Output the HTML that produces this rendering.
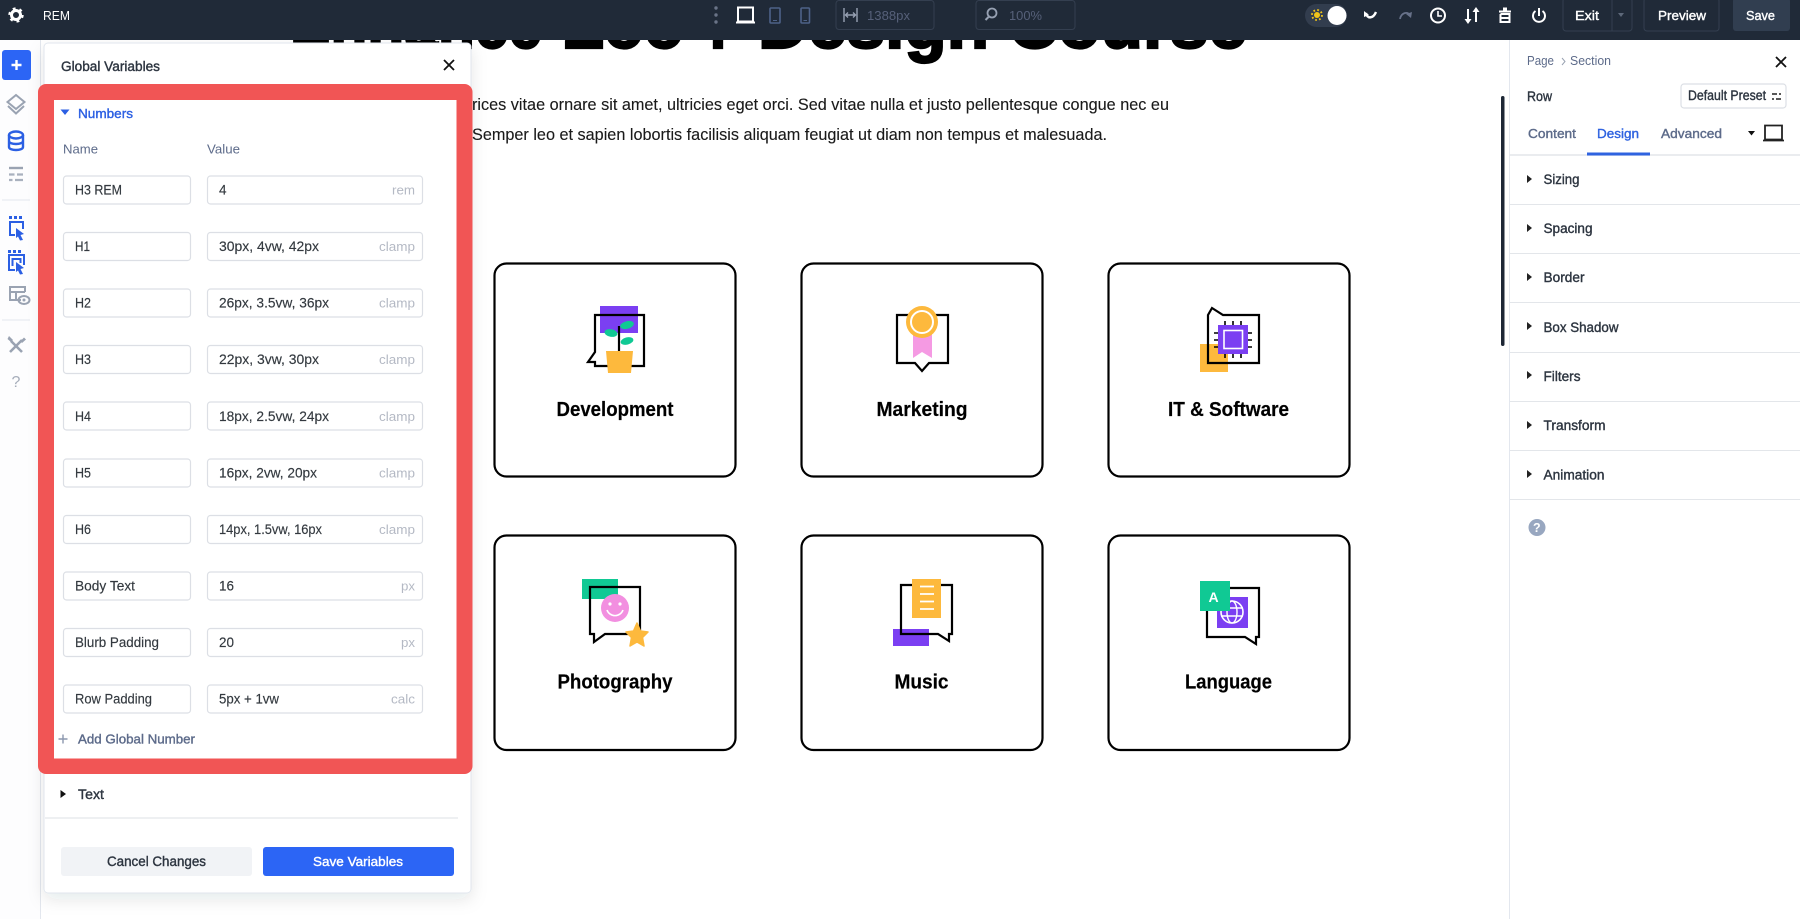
<!DOCTYPE html>
<html lang="en">
<head>
<meta charset="utf-8">
<title>REM - Global Variables</title>
<style>
html,body{margin:0;padding:0;background:#fff;width:1800px;height:919px;overflow:hidden}
svg{display:block;position:absolute;left:0;top:0}
text{font-family:"Liberation Sans",sans-serif;font-size:13px;white-space:pre}
.m{stroke:currentColor;stroke-width:.38px}
.lab{fill:#5d6b8a;color:#5d6b8a}
.val{fill:#33393f;stroke:#33393f;stroke-width:.15px;font-size:13.5px}
.unit{fill:#b4b9c4;font-size:13px}
.sec{fill:#2d3540;color:#2d3540;font-size:13.5px}
.top{fill:#fff;color:#fff;font-size:13px}
.dim{fill:#566079;font-size:13px}
.title{font-weight:bold;font-size:20px;fill:#000;stroke:#000;stroke-width:.2px}
.para{font-size:17px;fill:#1a1a1a;stroke:#1a1a1a;stroke-width:.12px}
.fld{fill:#fff;stroke:#dcdfe5;stroke-width:1.2}
.bub{fill:none;stroke:#000;stroke-width:2.2;stroke-linejoin:miter}
.ic{fill:none;stroke:#fff;stroke-width:2}
.side{fill:none;stroke:#9aa3b2;stroke-width:2}
.blue{fill:none;stroke:#2b5fe3;stroke-width:2}
</style>
</head>
<body>
<svg width="1800" height="919" viewBox="0 0 1800 919" xmlns="http://www.w3.org/2000/svg">
<defs>
<filter id="sh" x="-10%" y="-5%" width="120%" height="110%"><feDropShadow dx="0" dy="6" stdDeviation="8" flood-color="#1f2937" flood-opacity=".1"/></filter>
</defs>
<rect width="1800" height="919" fill="#fff"/>

<!-- page heading -->
<g font-weight="bold" stroke="#000" stroke-width="2.2">
<text x="290" y="48" style="font-size:70px" fill="#000" textLength="252" lengthAdjust="spacingAndGlyphs">Enhance</text>
<text x="564" y="48" style="font-size:70px" fill="#000" textLength="120" lengthAdjust="spacingAndGlyphs">Zoo</text>
<text x="708" y="48" style="font-size:70px" fill="#000" textLength="20" lengthAdjust="spacingAndGlyphs">:</text>
<text x="758" y="48" style="font-size:70px" fill="#000" textLength="489" lengthAdjust="spacingAndGlyphs">Design Course</text>
</g>
<text class="para" x="472" y="110" textLength="697" lengthAdjust="spacingAndGlyphs">rices vitae ornare sit amet, ultricies eget orci. Sed vitae nulla et justo pellentesque congue nec eu</text>
<text class="para" x="472" y="140" textLength="635" lengthAdjust="spacingAndGlyphs">Semper leo et sapien lobortis facilisis aliquam feugiat ut diam non tempus et malesuada.</text>

<!-- cards -->
<g fill="#fff" stroke="#000" stroke-width="2.2">
<rect x="494.500" y="263.500" width="241" height="213" rx="12"/>
<rect x="801.500" y="263.500" width="241" height="213" rx="12"/>
<rect x="1108.500" y="263.500" width="241" height="213" rx="12"/>
<rect x="494.500" y="535.500" width="241" height="214.500" rx="12"/>
<rect x="801.500" y="535.500" width="241" height="214.500" rx="12"/>
<rect x="1108.500" y="535.500" width="241" height="214.500" rx="12"/>
</g>
<text class="title" x="556.500" y="416" textLength="117" lengthAdjust="spacingAndGlyphs">Development</text>
<text class="title" x="876.500" y="416" textLength="91" lengthAdjust="spacingAndGlyphs">Marketing</text>
<text class="title" x="1168" y="416" textLength="121" lengthAdjust="spacingAndGlyphs">IT &amp; Software</text>
<text class="title" x="557.500" y="688.500" textLength="115" lengthAdjust="spacingAndGlyphs">Photography</text>
<text class="title" x="894.500" y="688.500" textLength="54" lengthAdjust="spacingAndGlyphs">Music</text>
<text class="title" x="1185" y="688.500" textLength="87" lengthAdjust="spacingAndGlyphs">Language</text>

<!-- development icon -->
<rect x="600" y="306" width="38" height="27" fill="#7b3ff2"/>
<path class="bub" d="M595 315H644V366H595V362H588L595 352Z"/>
<path d="M606 351H633L631 373H608Z" fill="#fdb93d"/>
<path d="M619 326V351" stroke="#000" stroke-width="2.200"/>
<ellipse cx="627" cy="325" rx="7" ry="3.800" fill="#10c994" transform="rotate(-15 627 325)"/>
<ellipse cx="611" cy="333" rx="6.500" ry="3.800" fill="#10c994" transform="rotate(10 611 333)"/>
<ellipse cx="627" cy="341" rx="6.500" ry="3.600" fill="#10c994" transform="rotate(-15 627 341)"/>

<!-- marketing icon -->
<path class="bub" d="M897 315H948V363H929L922 371L915 363H897Z"/>
<path d="M913 332H932V358L922 352L913 358Z" fill="#f59ae3"/>
<circle cx="922" cy="322" r="16" fill="#fdb93d"/>
<circle cx="922" cy="322" r="11" fill="none" stroke="#fff" stroke-width="2"/>

<!-- IT icon -->
<rect x="1200" y="344" width="28" height="28" fill="#fdb93d"/>
<path class="bub" d="M1208 363V315L1212 308L1223 315H1259V363Z"/>
<path d="M1214 333H1252M1214 340H1252M1214 347H1252M1225 321V358M1233 321V358M1241 321V358" stroke="#000" stroke-width="1.600"/>
<rect x="1218" y="325" width="30" height="29" fill="#7b3ff2"/>
<rect x="1224" y="330.500" width="18.500" height="18" fill="#7b3ff2" stroke="#fff" stroke-width="1.600"/>

<!-- photography icon -->
<rect x="582" y="579" width="36" height="20" fill="#10c994"/>
<path class="bub" d="M590 587H640V634H605L594 642V634H590Z"/>
<circle cx="615" cy="608" r="14" fill="#f28fe0"/>
<circle cx="610" cy="604" r="1.600" fill="#fff"/>
<circle cx="620" cy="604" r="1.600" fill="#fff"/>
<path d="M607 610a8.500 8.500 0 0 0 16 0" fill="none" stroke="#fff" stroke-width="1.600"/>
<path d="M637 623L640.500 631L648 632L642.500 637.500L644 646L637 642L630 646L631.500 637.500L626 632L633.500 631Z" fill="#fdb93d" stroke="#fdb93d" stroke-width="1.500" stroke-linejoin="round"/>

<!-- music icon -->
<rect x="893" y="629" width="36" height="17" fill="#7b3ff2"/>
<path class="bub" d="M901 585H952V634H949V641L938 634H901Z"/>
<rect x="912" y="579" width="29" height="39" fill="#fdb93d"/>
<path d="M920 586.500H934M920 594H934M920 601.500H934M920 609H934" stroke="#fff" stroke-width="1.800"/>

<!-- language icon -->
<path class="bub" d="M1207 588H1259V637H1256V644L1245 637H1207Z"/>
<rect x="1217" y="597" width="31" height="31" fill="#7b3ff2"/>
<circle cx="1232" cy="612" r="11" fill="none" stroke="#fff" stroke-width="1.600"/>
<ellipse cx="1232" cy="612" rx="5" ry="11" fill="none" stroke="#fff" stroke-width="1.400"/>
<path d="M1221 608H1243M1221 616H1243" stroke="#fff" stroke-width="1.400"/>
<rect x="1200" y="581" width="30" height="30" fill="#10c994"/>
<text x="1208.500" y="602" fill="#fff" font-weight="bold" style="font-size:14px">A</text>

<!-- left sidebar -->
<rect x="0" y="40" width="41" height="879" fill="#fdfdfe"/>
<path d="M40.500 40V919" stroke="#e3e7ee" stroke-width="1"/>
<rect x="2" y="50" width="29" height="30" rx="3" fill="#2c65f5"/>
<path d="M16.500 60V70M11.500 65H21.500" stroke="#fff" stroke-width="2.400"/>
<path class="side" d="M16 95L24.500 102L16 109L7.500 102Z"/>
<path class="side" d="M8 106L16 113.500L24 106"/>
<ellipse class="blue" cx="16" cy="135" rx="7" ry="3.500" style="stroke-width:2.400"/>
<path class="blue" style="stroke-width:2.400" d="M9 135V147C9 151 23 151 23 147V135M9 141C9 145 23 145 23 141"/>
<path d="M9 168H23" stroke="#9aa3b2" stroke-width="2.400"/>
<path d="M9 174.500H14.500M17 174.500H23M9 180H12.500M15 180H23" stroke="#a9b1be" stroke-width="2.200"/>
<path d="M2 200H30M2 320H30" stroke="#e3e7ee"/>
<g fill="#2b5fe3">
<rect x="9" y="216" width="3" height="3"/><rect x="14" y="216" width="3" height="3"/><rect x="19" y="216" width="3" height="3"/>
<rect x="8" y="250" width="3" height="3"/><rect x="13" y="250" width="3" height="3"/><rect x="18" y="250" width="3" height="3"/>
<path d="M16 228L24 234L20.500 235L23 240L20 240.500L18 236.500L16 238Z"/>
<path d="M16 262L24 268L20.500 269L23 274L20 274.500L18 270.500L16 272Z"/>
</g>
<path class="blue" d="M15 235H10V222H23V229"/>
<path class="blue" d="M15 270H9V255H24V265M12.500 266V259H20.500V263"/>
<path class="side" d="M21 300H10V287H25V292M10 292H25M16 292V300"/>
<ellipse class="side" cx="24" cy="300" rx="5.500" ry="4"/>
<circle cx="24" cy="300" r="1.500" fill="#9aa3b2"/>
<path class="side" style="stroke-width:2.600" d="M11 341L22 352"/>
<path class="side" style="stroke-width:2.600" d="M22 340L10 352"/>
<path d="M9 336L13 340L11 342L7.500 339ZM24 337.500L26 339.500L22 343L20.500 341Z" fill="#9aa3b2"/>
<text x="11.500" y="387" fill="#a6adba" style="font-size:16px">?</text>

<!-- right panel -->
<rect x="1509" y="40" width="291" height="879" fill="#fff"/>
<path d="M1509.500 40V919" stroke="#e3e7ee"/>
<rect x="1501" y="96" width="3.500" height="250" rx="1.700" fill="#1d2735"/>
<text class="lab" x="1527" y="65" textLength="27" lengthAdjust="spacingAndGlyphs">Page</text>
<path d="M1562 58L1565 61.500L1562 65" fill="none" stroke="#9aa3b2" stroke-width="1"/>
<text class="lab" x="1570" y="65" textLength="41" lengthAdjust="spacingAndGlyphs">Section</text>
<path d="M1776 57L1786 67M1786 57L1776 67" stroke="#111" stroke-width="1.800"/>
<text class="sec m" x="1527" y="101" textLength="25" lengthAdjust="spacingAndGlyphs">Row</text>
<rect class="fld" x="1681" y="84" width="105" height="24" rx="3"/>
<text class="sec m" x="1688" y="100" textLength="78" lengthAdjust="spacingAndGlyphs">Default Preset</text>
<path d="M1772 94h5M1779 94h2M1772 99h2M1776 99h5" stroke="#222" stroke-width="1.500"/>
<text class="lab m" x="1528" y="138" textLength="48" lengthAdjust="spacingAndGlyphs">Content</text>
<text x="1597" y="138" fill="#2f63e0" color="#2f63e0" class="m" textLength="42" lengthAdjust="spacingAndGlyphs">Design</text>
<text class="lab m" x="1661" y="138" textLength="61" lengthAdjust="spacingAndGlyphs">Advanced</text>
<path d="M1748 131H1755L1751.500 135.500Z" fill="#111"/>
<path d="M1765 125.500H1782V139.500H1765ZM1763 140.500H1784" fill="none" stroke="#222" stroke-width="1.800"/>
<path d="M1509 155H1800" stroke="#e3e6ea" stroke-width="1.500"/>
<rect x="1587" y="152.500" width="63" height="3" fill="#2f63e0"/>
<g stroke="#e3e6ea">
<path d="M1510 204.500H1800M1510 253.500H1800M1510 302.500H1800M1510 352.500H1800M1510 401.500H1800M1510 450.500H1800M1510 499.500H1800"/>
</g>
<g fill="#222">
<path d="M1527 175V183L1532 179Z"/><path d="M1527 224V232L1532 228Z"/><path d="M1527 273V281L1532 277Z"/>
<path d="M1527 322V330L1532 326Z"/><path d="M1527 371V379L1532 375Z"/><path d="M1527 421V429L1532 425Z"/><path d="M1527 470V478L1532 474Z"/>
</g>
<text class="sec m" x="1543.500" y="184" textLength="36" lengthAdjust="spacingAndGlyphs">Sizing</text>
<text class="sec m" x="1543.500" y="233" textLength="49" lengthAdjust="spacingAndGlyphs">Spacing</text>
<text class="sec m" x="1543.500" y="282" textLength="41" lengthAdjust="spacingAndGlyphs">Border</text>
<text class="sec m" x="1543.500" y="332" textLength="75" lengthAdjust="spacingAndGlyphs">Box Shadow</text>
<text class="sec m" x="1543.500" y="381" textLength="37" lengthAdjust="spacingAndGlyphs">Filters</text>
<text class="sec m" x="1543.500" y="430" textLength="62" lengthAdjust="spacingAndGlyphs">Transform</text>
<text class="sec m" x="1543.500" y="479.500" textLength="61" lengthAdjust="spacingAndGlyphs">Animation</text>
<circle cx="1537" cy="527.500" r="8.500" fill="#98a7c0"/>
<text x="1533" y="532" fill="#fff" font-weight="bold" style="font-size:12.500px">?</text>

<!-- global variables panel -->
<rect x="44" y="43" width="427" height="850" rx="4" fill="#fff" stroke="#e1e6ee" filter="url(#sh)"/>
<text class="sec m" x="61" y="71" textLength="99" lengthAdjust="spacingAndGlyphs">Global Variables</text>
<path d="M444 60L454 70M454 60L444 70" stroke="#111" stroke-width="1.800"/>
<rect x="38" y="84" width="434.500" height="690" rx="8" fill="#f15555"/>
<rect x="54" y="100" width="402.500" height="658.500" fill="#fff"/>
<path d="M60.500 109.500H69.500L65 115Z" fill="#2b5fe3"/>
<text x="78" y="118" fill="#2b5fe3" color="#2b5fe3" class="m" textLength="55" lengthAdjust="spacingAndGlyphs">Numbers</text>
<text class="lab" x="63" y="153.500" textLength="35" lengthAdjust="spacingAndGlyphs">Name</text>
<text class="lab" x="207" y="153.500" textLength="33" lengthAdjust="spacingAndGlyphs">Value</text>

<g>
<rect class="fld" x="63.500" y="176" width="127" height="28" rx="3"/><rect class="fld" x="207.500" y="176" width="215" height="28" rx="3"/>
<rect class="fld" x="63.500" y="232.500" width="127" height="28" rx="3"/><rect class="fld" x="207.500" y="232.500" width="215" height="28" rx="3"/>
<rect class="fld" x="63.500" y="289" width="127" height="28" rx="3"/><rect class="fld" x="207.500" y="289" width="215" height="28" rx="3"/>
<rect class="fld" x="63.500" y="345.500" width="127" height="28" rx="3"/><rect class="fld" x="207.500" y="345.500" width="215" height="28" rx="3"/>
<rect class="fld" x="63.500" y="402" width="127" height="28" rx="3"/><rect class="fld" x="207.500" y="402" width="215" height="28" rx="3"/>
<rect class="fld" x="63.500" y="459" width="127" height="28" rx="3"/><rect class="fld" x="207.500" y="459" width="215" height="28" rx="3"/>
<rect class="fld" x="63.500" y="515.500" width="127" height="28" rx="3"/><rect class="fld" x="207.500" y="515.500" width="215" height="28" rx="3"/>
<rect class="fld" x="63.500" y="572" width="127" height="28" rx="3"/><rect class="fld" x="207.500" y="572" width="215" height="28" rx="3"/>
<rect class="fld" x="63.500" y="628.500" width="127" height="28" rx="3"/><rect class="fld" x="207.500" y="628.500" width="215" height="28" rx="3"/>
<rect class="fld" x="63.500" y="685" width="127" height="28" rx="3"/><rect class="fld" x="207.500" y="685" width="215" height="28" rx="3"/>
</g>

<text class="val" x="75" y="194.500" textLength="47" lengthAdjust="spacingAndGlyphs">H3 REM</text>
<text class="val" x="219" y="194.500">4</text>
<text class="unit" x="392" y="194.500" textLength="23" lengthAdjust="spacingAndGlyphs">rem</text>

<text class="val" x="75" y="251" textLength="15" lengthAdjust="spacingAndGlyphs">H1</text>
<text class="val" x="219" y="251" textLength="100" lengthAdjust="spacingAndGlyphs">30px, 4vw, 42px</text>
<text class="unit" x="379" y="251" textLength="36" lengthAdjust="spacingAndGlyphs">clamp</text>

<text class="val" x="75" y="307.500" textLength="16" lengthAdjust="spacingAndGlyphs">H2</text>
<text class="val" x="219" y="307.500" textLength="110" lengthAdjust="spacingAndGlyphs">26px, 3.5vw, 36px</text>
<text class="unit" x="379" y="307.500" textLength="36" lengthAdjust="spacingAndGlyphs">clamp</text>

<text class="val" x="75" y="364" textLength="16" lengthAdjust="spacingAndGlyphs">H3</text>
<text class="val" x="219" y="364" textLength="100" lengthAdjust="spacingAndGlyphs">22px, 3vw, 30px</text>
<text class="unit" x="379" y="364" textLength="36" lengthAdjust="spacingAndGlyphs">clamp</text>

<text class="val" x="75" y="421" textLength="16" lengthAdjust="spacingAndGlyphs">H4</text>
<text class="val" x="219" y="421" textLength="110" lengthAdjust="spacingAndGlyphs">18px, 2.5vw, 24px</text>
<text class="unit" x="379" y="421" textLength="36" lengthAdjust="spacingAndGlyphs">clamp</text>

<text class="val" x="75" y="477.500" textLength="16" lengthAdjust="spacingAndGlyphs">H5</text>
<text class="val" x="219" y="477.500" textLength="98" lengthAdjust="spacingAndGlyphs">16px, 2vw, 20px</text>
<text class="unit" x="379" y="477.500" textLength="36" lengthAdjust="spacingAndGlyphs">clamp</text>

<text class="val" x="75" y="534" textLength="16" lengthAdjust="spacingAndGlyphs">H6</text>
<text class="val" x="219" y="534" textLength="103" lengthAdjust="spacingAndGlyphs">14px, 1.5vw, 16px</text>
<text class="unit" x="379" y="534" textLength="36" lengthAdjust="spacingAndGlyphs">clamp</text>

<text class="val" x="75" y="590.500" textLength="60" lengthAdjust="spacingAndGlyphs">Body Text</text>
<text class="val" x="219" y="590.500" textLength="15" lengthAdjust="spacingAndGlyphs">16</text>
<text class="unit" x="401" y="590.500" textLength="14" lengthAdjust="spacingAndGlyphs">px</text>

<text class="val" x="75" y="647" textLength="84" lengthAdjust="spacingAndGlyphs">Blurb Padding</text>
<text class="val" x="219" y="647" textLength="15" lengthAdjust="spacingAndGlyphs">20</text>
<text class="unit" x="401" y="647" textLength="14" lengthAdjust="spacingAndGlyphs">px</text>

<text class="val" x="75" y="703.500" textLength="77" lengthAdjust="spacingAndGlyphs">Row Padding</text>
<text class="val" x="219" y="703.500" textLength="60" lengthAdjust="spacingAndGlyphs">5px + 1vw</text>
<text class="unit" x="391" y="703.500" textLength="24" lengthAdjust="spacingAndGlyphs">calc</text>

<path d="M58.500 739H67.500M63 734.500V743.500" stroke="#8c97ae" stroke-width="1.400"/>
<text class="lab m" x="78" y="743.500" textLength="117" lengthAdjust="spacingAndGlyphs">Add Global Number</text>

<path d="M60.500 790V798L66 794Z" fill="#111"/>
<text class="sec m" x="78" y="799" textLength="26" lengthAdjust="spacingAndGlyphs">Text</text>
<path d="M45 818H458" stroke="#e3e6ea" stroke-width="1.200"/>
<rect x="61" y="847" width="191" height="29" rx="3" fill="#f1f3f6"/>
<rect x="263" y="847" width="191" height="29" rx="3" fill="#2c65f5"/>
<text class="sec m" x="107" y="866" textLength="99" lengthAdjust="spacingAndGlyphs">Cancel Changes</text>
<text x="313" y="866" fill="#fff" color="#fff" class="m" textLength="90" lengthAdjust="spacingAndGlyphs">Save Variables</text>

<!-- top bar -->
<rect x="0" y="0" width="1800" height="40" fill="#202a38"/>
<circle cx="16" cy="15" r="4.500" fill="none" stroke="#fff" stroke-width="3"/>
<circle cx="16" cy="15" r="6.500" fill="none" stroke="#fff" stroke-width="2.400" stroke-dasharray="2.800 4"/>
<text class="top" x="43" y="20" textLength="27" lengthAdjust="spacingAndGlyphs">REM</text>

<g fill="#6a7488"><circle cx="716" cy="8" r="1.700"/><circle cx="716" cy="15" r="1.700"/><circle cx="716" cy="22" r="1.700"/></g>
<path d="M738 7.500H753V21.500H738ZM736 22.500H755" fill="none" stroke="#fff" stroke-width="2"/>
<rect x="770" y="8" width="10" height="15" rx="1" fill="none" stroke="#4e6288" stroke-width="1.600"/>
<rect x="801" y="8" width="8.500" height="15" rx="1" fill="none" stroke="#4e6288" stroke-width="1.600"/>
<path d="M773 20.500H777M803.500 20.500H807" stroke="#4e6288"/>

<rect x="836" y="0.500" width="98" height="29" rx="3" fill="none" stroke="#343f50"/>
<path d="M844 8V22M857 8V22M846 15H855M848 12.500L845.500 15L848 17.500M853 12.500L855.500 15L853 17.500" fill="none" stroke="#97a1b3" stroke-width="1.400"/>
<text class="dim" x="867" y="20" textLength="43" lengthAdjust="spacingAndGlyphs">1388px</text>
<rect x="976" y="0.500" width="99" height="29" rx="3" fill="none" stroke="#343f50"/>
<circle cx="992" cy="13" r="4.500" fill="none" stroke="#97a1b3" stroke-width="1.800"/>
<path d="M988.500 17L985.500 20" stroke="#97a1b3" stroke-width="2"/>
<text class="dim" x="1009" y="20" textLength="33" lengthAdjust="spacingAndGlyphs">100%</text>

<rect x="1305" y="4" width="42" height="23" rx="11.500" fill="#323d4e"/>
<circle cx="1317" cy="15" r="3" fill="#f0c419"/>
<circle cx="1317" cy="15" r="5" fill="none" stroke="#f0c419" stroke-width="1.800" stroke-dasharray="1.800 2.130"/>
<circle cx="1337" cy="15.500" r="9.500" fill="#fff"/>

<path class="ic" d="M1366 13C1367 19 1373 19 1376 12" style="stroke-width:2.400"/>
<path d="M1364 11L1369 15L1364 17Z" fill="#fff"/>
<path class="ic" style="stroke:#68728a;stroke-width:1.800" d="M1400 19C1401 13 1407 11 1410 15"/>
<path d="M1412 12L1411 18L1406 14Z" fill="#68728a"/>
<circle class="ic" cx="1438" cy="15.500" r="7"/>
<path class="ic" d="M1438 11V16H1442" style="stroke-width:1.600"/>
<path class="ic" d="M1468 9V21M1476 10V22"/>
<path d="M1464.500 19H1471.500L1468 24ZM1472.500 12H1479.500L1476 7Z" fill="#fff"/>
<path class="ic" d="M1499 11.500H1511"/>
<rect x="1503" y="7.500" width="4" height="3" fill="#fff"/>
<path class="ic" d="M1500.500 14V22H1509.500V14H1500.500M1500.500 18H1509.500"/>
<path class="ic" d="M1535.500 11A6 6 0 1 0 1542.500 11M1539 8V16"/>

<rect x="1563" y="-2" width="69" height="33" rx="3" fill="none" stroke="#343f50"/>
<path d="M1612 0V31" stroke="#343f50"/>
<text class="top m" x="1575" y="20" textLength="24" lengthAdjust="spacingAndGlyphs">Exit</text>
<path d="M1618 13H1624L1621 17Z" fill="#5d6879"/>
<rect x="1644" y="-2" width="75" height="33" rx="3" fill="none" stroke="#343f50"/>
<text class="top m" x="1658" y="20" textLength="48" lengthAdjust="spacingAndGlyphs">Preview</text>
<rect x="1733" y="-2" width="57" height="33" rx="3" fill="#313e50"/>
<text class="top m" x="1746" y="20" textLength="29" lengthAdjust="spacingAndGlyphs">Save</text>
</svg>
</body>
</html>
